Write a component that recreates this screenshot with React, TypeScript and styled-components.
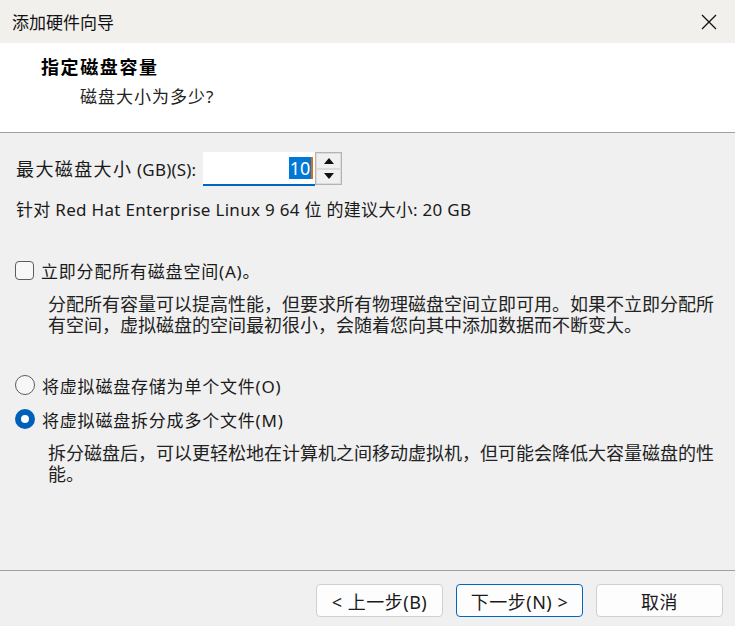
import React from 'react'
import styled, { createGlobalStyle } from 'styled-components'

const GlobalStyle = createGlobalStyle`
  html, body {
    margin: 0;
    padding: 0;
    background: #f0f0f0;
  }
  * {
    box-sizing: border-box;
  }
`

const uiFont = `"Segoe UI", "Noto Sans", "Noto Sans CJK SC", sans-serif`

const Window = styled.div`
  width: 735px;
  height: 626px;
  display: flex;
  flex-direction: column;
  background: #f0f0f0;
  font-family: ${uiFont};
  color: #1a1a1a;
  overflow: hidden;
`

const TitleBar = styled.div`
  height: 43px;
  flex-shrink: 0;
  display: flex;
  align-items: center;
  justify-content: space-between;
  padding: 0 12px 0 12px;
  background: #f2f0ed;
`

const TitleText = styled.div`
  font-size: 17px;
  letter-spacing: 0;
  color: #111;
`

const CloseButton = styled.button`
  width: 24px;
  height: 24px;
  padding: 0;
  border: none;
  background: transparent;
  display: flex;
  align-items: center;
  justify-content: center;
  margin-right: 2px;
`

const Header = styled.div`
  height: 90px;
  flex-shrink: 0;
  background: #ffffff;
  border-bottom: 1px solid #a0a0a0;
  padding: 12px 0 0 41px;
  display: flex;
  flex-direction: column;
  gap: 6px;
`

const HeaderTitle = styled.div`
  font-size: 18px;
  font-weight: 700;
  line-height: 24px;
  letter-spacing: 1.6px;
  color: #000;
`

const HeaderSub = styled.div`
  font-size: 17px;
  line-height: 24px;
  letter-spacing: 1px;
  margin-left: 39px;
  color: #222;
`

const Body = styled.div`
  flex: 1;
  padding: 19px 0 0 16px;
  display: flex;
  flex-direction: column;
`

const SizeRow = styled.div`
  display: flex;
  align-items: center;
  height: 34px;
`

const Label = styled.span`
  font-size: 18px;
  letter-spacing: 1.4px;
  line-height: 24px;
  margin-right: 7px;
`

const Latin = styled.span`
  font-size: 17px;
  letter-spacing: 0.2px;
`

const InputBox = styled.div`
  width: 112px;
  height: 34px;
  background: #ffffff;
  border-bottom: 2px solid #0067c0;
  display: flex;
  align-items: center;
  justify-content: flex-end;
  padding-right: 2px;
`

const Selected = styled.span`
  background: #0078d7;
  color: #fff;
  font-size: 18px;
  line-height: 22px;
  padding: 0 1px;
`

const Caret = styled.span`
  width: 2px;
  height: 22px;
  background: #e06a10;
`

const Spinner = styled.div`
  width: 27px;
  height: 33px;
  display: flex;
  flex-direction: column;
  border: 1px solid #b4b4b4;
  align-self: flex-start;
`

const SpinButton = styled.div`
  flex: 1;
  display: flex;
  align-items: center;
  justify-content: center;
  background: #f0f0f0;
  border: 1px solid #dcdcdc;
`

const InfoLine = styled.div`
  font-size: 17px;
  letter-spacing: 0.3px;
  line-height: 22px;
  margin-top: 13px;
`

const OptionRow = styled.label<{ $gap: number }>`
  display: flex;
  align-items: center;
  gap: 7px;
  margin-top: ${({ $gap }) => $gap}px;
  height: 24px;
  font-size: 17px;
  letter-spacing: 0.8px;
`

const CheckBox = styled.span`
  width: 19px;
  height: 19px;
  border: 1px solid #5c5c5c;
  border-radius: 4px;
  background: #f7f7f7;
  margin-left: -1px;
  flex-shrink: 0;
`

const Radio = styled.span<{ $checked?: boolean }>`
  width: 20px;
  height: 20px;
  border-radius: 50%;
  flex-shrink: 0;
  margin-left: -1px;
  background: ${({ $checked }) => ($checked ? '#ffffff' : '#f7f7f7')};
  border: ${({ $checked }) => ($checked ? '6px solid #005fb8' : '1px solid #5c5c5c')};
`

const Description = styled.p`
  margin: 12px 0 0 32px;
  width: 680px;
  font-size: 18px;
  letter-spacing: 0;
  line-height: 21px;
  color: #222;
`

const Footer = styled.div`
  height: 56px;
  flex-shrink: 0;
  border-top: 1px solid #a0a0a0;
  display: flex;
  justify-content: flex-end;
  gap: 13px;
  padding: 13px 12px 0 0;
`

const Button = styled.button<{ $primary?: boolean }>`
  width: 127px;
  height: 33px;
  border-radius: 4px;
  background: #fdfdfd;
  border: 1px solid ${({ $primary }) => ($primary ? '#0067c0' : '#d0d0d0')};
  font-family: ${uiFont};
  font-size: 18px;
  letter-spacing: 0.5px;
  color: #1a1a1a;
  padding: 0;
`

const Arrow = ({ up }: { up?: boolean }) => (
  <svg width="10" height="6" viewBox="0 0 10 6">
    <path d={up ? 'M0 6 L5 0 L10 6 Z' : 'M0 0 L5 6 L10 0 Z'} fill="#111" />
  </svg>
)

export default function App() {
  return (
    <>
      <GlobalStyle />
      <Window>
        <TitleBar>
          <TitleText>添加硬件向导</TitleText>
          <CloseButton aria-label="关闭">
            <svg width="16" height="16" viewBox="0 0 16 16">
              <path d="M1 1 L15 15 M15 1 L1 15" stroke="#111" strokeWidth="1.3" />
            </svg>
          </CloseButton>
        </TitleBar>

        <Header>
          <HeaderTitle>指定磁盘容量</HeaderTitle>
          <HeaderSub>磁盘大小为多少?</HeaderSub>
        </Header>

        <Body>
          <SizeRow>
            <Label>
              最大磁盘大小<Latin> (GB)(S):</Latin>
            </Label>
            <InputBox>
              <Selected>10</Selected>
              <Caret />
            </InputBox>
            <Spinner>
              <SpinButton>
                <Arrow up />
              </SpinButton>
              <SpinButton>
                <Arrow />
              </SpinButton>
            </Spinner>
          </SizeRow>

          <InfoLine>针对 Red Hat Enterprise Linux 9 64 位 的建议大小: 20 GB</InfoLine>

          <OptionRow $gap={37}>
            <CheckBox />
            立即分配所有磁盘空间(A)。
          </OptionRow>
          <Description>
            分配所有容量可以提高性能，但要求所有物理磁盘空间立即可用。如果不立即分配所有空间，虚拟磁盘的空间最初很小，会随着您向其中添加数据而不断变大。
          </Description>

          <OptionRow $gap={37}>
            <Radio />
            将虚拟磁盘存储为单个文件(O)
          </OptionRow>
          <OptionRow $gap={10}>
            <Radio $checked />
            将虚拟磁盘拆分成多个文件(M)
          </OptionRow>
          <Description>
            拆分磁盘后，可以更轻松地在计算机之间移动虚拟机，但可能会降低大容量磁盘的性能。
          </Description>
        </Body>

        <Footer>
          <Button>&lt; 上一步(B)</Button>
          <Button $primary>下一步(N) &gt;</Button>
          <Button>取消</Button>
        </Footer>
      </Window>
    </>
  )
}
